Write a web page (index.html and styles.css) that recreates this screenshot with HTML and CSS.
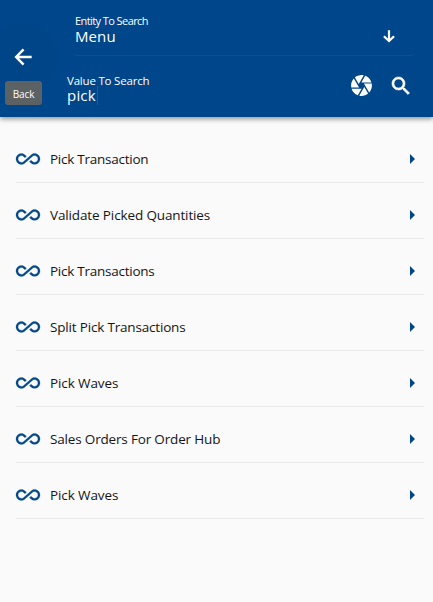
FILE: index.html
```html
<!DOCTYPE html>
<html lang="en">
<head>
<meta charset="utf-8">
<title>Search</title>
<link rel="stylesheet" href="styles.css">
</head>
<body>
<svg class="defs" width="0" height="0" aria-hidden="true">
  <symbol id="loop" viewBox="0 0 24 24" overflow="visible"><path stroke="currentColor" stroke-width=".3" d="M18.6 6.62c-1.44 0-2.8.56-3.77 1.53L12 10.66 10.48 12h.01L7.8 14.39c-.64.64-1.49.99-2.4.99-1.87 0-3.39-1.51-3.39-3.38S3.53 8.62 5.4 8.62c.91 0 1.76.35 2.44 1.03l1.13 1 1.51-1.34L9.22 8.2C8.2 7.18 6.84 6.62 5.4 6.62 2.42 6.62 0 9.04 0 12s2.42 5.38 5.4 5.38c1.44 0 2.8-.56 3.77-1.53l2.83-2.5.01.01L13.52 12h-.01l2.69-2.39c.64-.64 1.49-.99 2.4-.99 1.87 0 3.39 1.51 3.39 3.38s-1.52 3.38-3.39 3.38c-.9 0-1.76-.35-2.44-1.03l-1.14-1.01-1.51 1.34 1.27 1.12c1.02 1.01 2.37 1.57 3.82 1.57 2.98 0 5.4-2.41 5.4-5.38s-2.42-5.37-5.4-5.37z"/></symbol>
  <symbol id="next" viewBox="0 0 24 24"><path d="M10 17l5-5-5-5v10z"/></symbol>
</svg>
<header class="header">
  <div class="nav">
    <button class="back" aria-label="Back">
      <svg width="24" height="24" viewBox="0 0 24 24"><path d="M20.7 12H5.6M12.6 4.4L5.2 12l7.4 7.6" fill="none" stroke="currentColor" stroke-width="2.5"/></svg>
    </button>
    <span class="tooltip">Back</span>
  </div>
  <div class="fields">
    <div class="entity">
      <div>
        <div class="label">Entity To Search</div>
        <div class="value">Menu</div>
      </div>
      <svg class="down" width="14" height="14" viewBox="0 0 14 14"><path d="M7 1.2V12M1.9 7.2L7 12l5.1-4.8" fill="none" stroke="currentColor" stroke-width="2.2"/></svg>
    </div>
    <div class="query">
      <div>
        <div class="label query-label">Value To Search</div>
        <div class="value query-value">pick<i class="caret"></i></div>
      </div>
      <div class="actions">
        <svg width="25" height="25" viewBox="0 0 24 24"><path d="M9.4 10.5l4.77-8.26C13.47 2.09 12.75 2 12 2c-2.4 0-4.6.85-6.32 2.25l3.66 6.35.06-.1zM21.54 9c-.92-2.92-3.15-5.26-6-6.34L11.88 9h9.66zm.26 1h-7.49l.29.5 4.76 8.25C21 16.97 22 14.61 22 12c0-.69-.07-1.35-.2-2zM8.54 12l-3.9-6.75C3.01 7.03 2 9.39 2 12c0 .69.07 1.35.2 2h7.49l-1.15-2zm-6.08 3c.92 2.92 3.15 5.26 6 6.34L12.12 15H2.46zm11.27 0l-3.9 6.76c.7.15 1.42.24 2.17.24 2.4 0 4.6-.85 6.32-2.25l-3.66-6.35-.93 1.6z"/></svg>
        <svg class="search" width="24" height="24" viewBox="0 0 24 24"><path d="M15.5 14h-.79l-.28-.27C15.41 12.59 16 11.11 16 9.5 16 5.91 13.09 3 9.5 3S3 5.91 3 9.5 5.91 16 9.5 16c1.61 0 3.09-.59 4.23-1.57l.27.28v.79l5 4.99L20.49 19l-4.99-5zm-6 0C7.01 14 5 11.99 5 9.5S7.01 5 9.5 5 14 7.01 14 9.5 11.99 14 9.5 14z"/></svg>
      </div>
    </div>
  </div>
</header>
<main class="list">
  <div class="row"><svg><use href="#loop"/></svg><span class="name n1">Pick Transaction</span><svg><use href="#next"/></svg></div>
  <div class="row"><svg><use href="#loop"/></svg><span class="name n2">Validate Picked Quantities</span><svg><use href="#next"/></svg></div>
  <div class="row"><svg><use href="#loop"/></svg><span class="name n3">Pick Transactions</span><svg><use href="#next"/></svg></div>
  <div class="row"><svg><use href="#loop"/></svg><span class="name n4">Split Pick Transactions</span><svg><use href="#next"/></svg></div>
  <div class="row"><svg><use href="#loop"/></svg><span class="name n5">Pick Waves</span><svg><use href="#next"/></svg></div>
  <div class="row"><svg><use href="#loop"/></svg><span class="name n6">Sales Orders For Order Hub</span><svg><use href="#next"/></svg></div>
  <div class="row"><svg><use href="#loop"/></svg><span class="name n5">Pick Waves</span><svg><use href="#next"/></svg></div>
</main>
</body>
</html>
```
FILE: styles.css
```css
* { box-sizing: border-box; }
body {
  margin: 0;
  height: 602px;
  overflow: hidden;
  background: #fafafa;
  color: #000;
  font-family: "Open Sans", "Noto Sans", sans-serif;
}
.defs { position: absolute; }
svg { display: block; flex: none; fill: currentColor; overflow: visible; }
.header {
  display: flex;
  height: 117px;
  background: #00468b;
  color: #fff;
  box-shadow: 0 2px 5px rgba(0, 0, 0, .42);
  overflow: clip;
  overflow-clip-margin: 12px;
}
.nav { position: relative; flex: none; width: 67px; }
.back {
  display: flex;
  align-items: center;
  justify-content: center;
  width: 68px;
  height: 68px;
  margin: 23px 0 0 -11px;
  padding: 0;
  border: 0;
  border-radius: 50%;
  background: #004587;
  color: #fff;
}
.tooltip {
  position: absolute;
  left: 5px;
  top: 81px;
  width: 37px;
  height: 24px;
  border-radius: 3px;
  background: #5c6164;
  font-size: 10px;
  line-height: 26px;
  letter-spacing: -.1px;
  text-align: center;
}
.fields { flex: 1; padding-right: 20px; }
.entity {
  display: flex;
  justify-content: space-between;
  height: 56px;
  margin-left: 8px;
  padding: 13px 17px 0 0;
  border-bottom: 1px solid #0b4f91;
}
.label { font-size: 11px; line-height: 16px; letter-spacing: -.58px; }
.value { font-size: 15px; line-height: 15px; letter-spacing: .1px; }
.down { margin-top: 16px; }
.query { display: flex; justify-content: space-between; padding-top: 17px; }
.query-label { font-size: 11.5px; letter-spacing: -.2px; }
.query-value { display: flex; line-height: 13px; letter-spacing: .2px; }
.caret { width: 1px; height: 19px; margin-left: 1px; margin-top: -3px; background: #3c48b4; }
.actions { display: flex; gap: 15px; }
.search { margin-top: 1px; stroke: currentColor; stroke-width: .6px; }
.list { padding: 10px 9px 0 16px; }
.row {
  display: flex;
  align-items: center;
  height: 56px;
  padding-top: 8px;
  border-bottom: 1px solid #ebebeb;
}
.row svg { width: 24px; height: 24px; color: #00468b; }
.name { flex: 1; margin-left: 10px; padding-top: 1px; color: #151515; font-size: 13.5px; line-height: 20px; font-weight: 400; white-space: nowrap; }
.n1, .n3 { letter-spacing: -.25px; }
.n2 { letter-spacing: -.13px; }
.n4 { letter-spacing: -.18px; }
.n5 { letter-spacing: -.1px; }
.n6 { letter-spacing: -.17px; }
```
